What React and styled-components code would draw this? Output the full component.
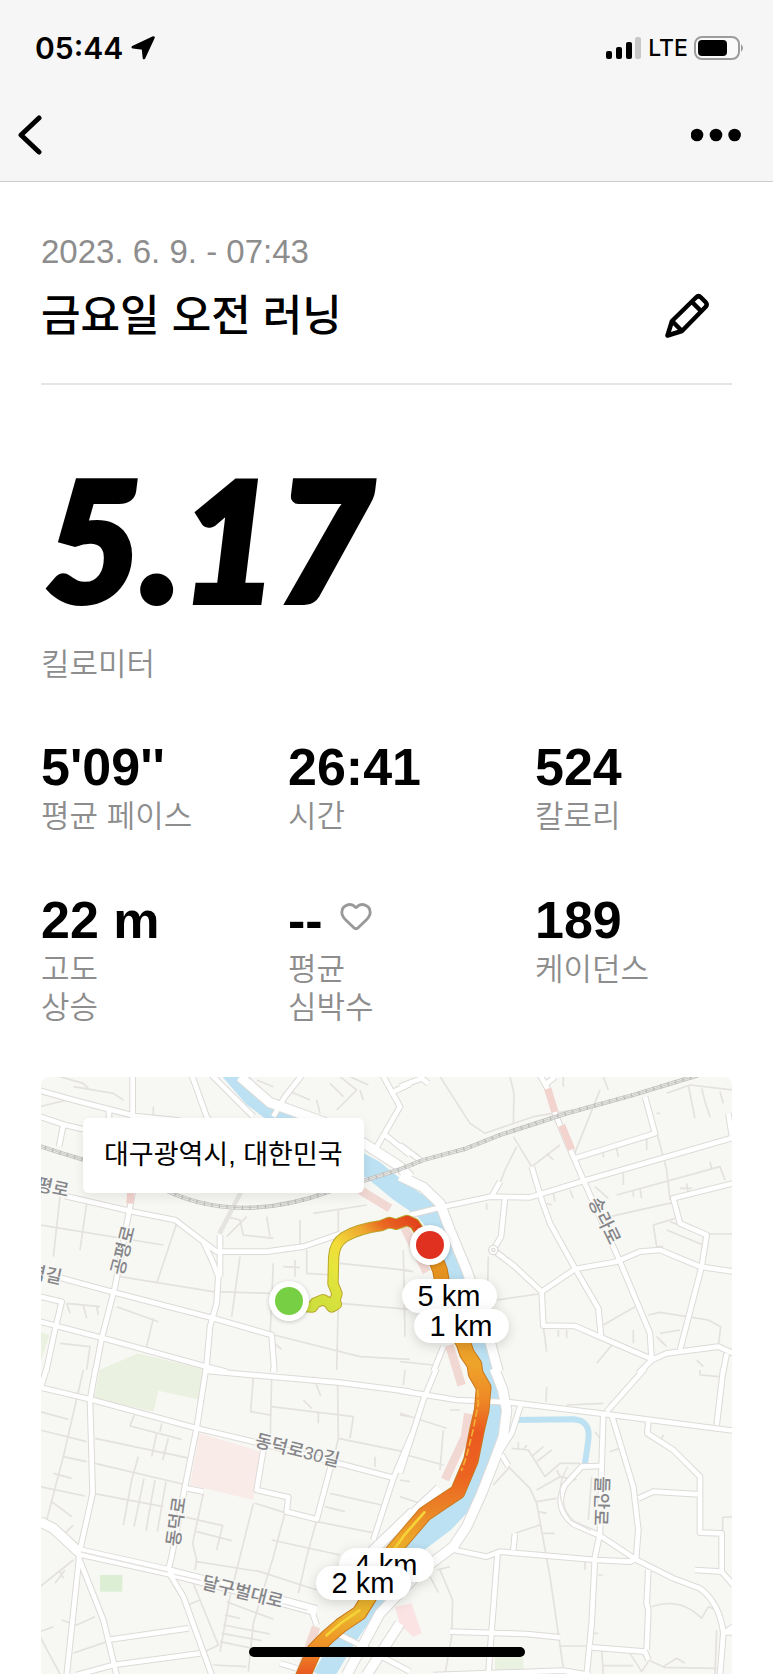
import React from 'react';
import styled, { createGlobalStyle } from 'styled-components';
import { Heart } from 'lucide-react';

const latin = `'Liberation Sans', 'Noto Sans CJK KR', sans-serif`;

const GlobalStyle = createGlobalStyle`
    * {
        box-sizing: border-box;
    }

    body {
        margin: 0;
        background-color: #fff;
        color: #000;
        font-family: ${latin};
    }
`

const stats = [
    { value: "5'09''", label: '평균 페이스' },
    { value: '26:41', label: '시간' },
    { value: '524', label: '칼로리' },
    { value: '22 m', label: '고도\n상승' },
    { value: '--', label: '평균\n심박수', heart: true },
    { value: '189', label: '케이던스' },
];

// Every tile has its own origin, in thirds of a map pixel
const tiles = [
    {
        origin: '-3 -21',
        wide: [
            'M600 20 L690 98 L850 156 L975 222 L1080 290 L1110 322',
        ],
        roads: [
            'M0 62 L100 90 L285 138 L420 152',
            'M278 0 L278 368 L272 400 L225 650 L185 805 L166 905',
            'M75 378 L280 425 L405 450 L490 515 L530 545 L680 545 L790 530 L900 492',
            'M490 515 L520 580 L535 620 L530 700 L510 770 L498 905',
            'M540 495 L540 620',
            'M30 615 L215 665 L520 745 L695 795 L703 905',
            'M0 680 L65 695 L45 780 L18 905',
            'M0 755 L190 805 L500 890 L560 905',
            'M450 0 L500 140 L540 200',
            'M500 0 L640 140',
            'M0 140 L75 165 L140 180',
            'M70 165 L57 230',
            'M207 120 V150',
            'M790 10 L735 80 L700 140',
            'M1025 10 L1080 110 L1005 240',
            'M1050 70 L1110 42',
            'M1030 190 L1110 255',
        ],
        lanes: [
            'M0 110 L80 90 L160 98 M60 20 L130 40 L150 60 M100 50 L220 70 L250 90',
            'M0 465 L370 525 M60 380 L40 560 M140 400 L120 540 M410 460 L350 640',
            'M240 620 L520 665 L690 670 M80 700 L180 710 M80 700 L90 730 M130 705 L140 745 M170 710 L175 735',
            'M230 710 L355 755 M340 745 L315 850 M60 820 L150 830 L140 900',
            'M600 370 L560 440 L600 450 L610 495 L700 505 M680 440 L690 500 M780 450 L780 540 M895 420 L895 500',
            'M600 560 L575 740 M700 580 L690 800 M765 570 V620 M730 590 L780 592 M800 540 L800 610 L880 615',
            'M895 690 L890 900 M900 580 L1110 602 M900 700 L1110 718 M703 795 L960 860 L1110 868 M703 820 L725 838',
            'M890 120 L950 60 L900 20 M870 40 L910 80 M960 60 L970 90 M740 60 L810 90 M650 30 L700 50',
            'M985 45 L930 20 M830 90 L840 130 M340 110 V140 M820 430 L980 405 M620 440 L560 500',
        ],
    },
    {
        origin: '1077 -21',
        wide: [
            'M0 318 L70 352 L120 400 L150 480 L200 600 L255 760 L295 905',
        ],
        roads: [
            'M412 0 L445 60 L465 130 L520 260 L550 330 L660 575 L750 790 L755 870 L715 910',
            'M30 435 L130 410 L270 380 L390 382 L560 330 L1000 203',
            'M525 265 L765 190 L735 80',
            'M985 130 L997 205',
            'M435 45 L465 20',
            'M395 290 L425 390 L450 460 L525 595 L595 715 L603 800',
            'M300 335 L275 380',
            'M315 385 L303 500 L280 540 L345 590 L425 665 L430 767 L525 768 L610 805 L750 865',
            'M425 665 L525 597 L650 575 L720 545 L780 540 L900 590 L1000 605',
            'M1000 340 L820 385 L840 460 L920 495 L905 590 L840 840',
            'M755 870 L800 850 L955 830 L1000 850',
            'M980 850 L970 905',
            'M0 225 L60 270',
            'M0 50 L65 25 L85 40',
            'M130 830 L100 905',
        ],
        lanes: [
            'M120 20 L210 160 L255 190 M330 20 L342 70 L340 160 M255 190 L400 140 L520 120',
            'M340 200 L395 290 M350 230 L315 300 L300 340 M395 290 L480 225 M440 250 L460 270',
            'M520 260 L600 60 M610 20 L625 60 M865 45 L885 145 M905 55 L915 95 L930 140 M800 70 L870 45 L1000 60',
            'M960 65 L970 100 M770 185 L800 300 L810 390 M740 205 V240 M650 235 L655 260 M610 245 V262',
            'M650 375 L960 290 L975 330 M630 440 L830 395 M670 310 V345 M700 360 V380 M720 355 L725 385 M930 275 L935 295',
            'M840 355 L875 355 M860 340 L865 370 M825 445 L760 465 L770 530 L790 530 M800 480 L910 525 M810 455 L920 495',
            'M920 492 L1000 492 M265 560 L262 690 M290 690 L415 672 M430 770 L440 845 M475 780 V800 M500 780 V805',
            'M610 765 L705 710 M745 735 L780 727 L925 750 L962 770 L955 830 M780 790 L840 780 M770 800 L800 830',
            'M590 880 L640 820 M700 780 V820 M0 875 L100 885 M0 600 L40 605 M10 540 L15 800 M260 400 V420',
            'M440 400 L455 405 M510 360 L520 385 M460 370 L465 395 M585 350 L625 385 M890 870 L910 890 M770 130 L780 130 M490 20 V50',
        ],
    },
    {
        origin: '-3 879',
        wide: [
            'M0 455 L40 475 L115 545 L250 575 L385 605 L600 660 L830 722',
            'M990 550 L1120 425',
        ],
        roads: [
            'M167 -5 L150 90 L158 370 L120 540 L80 915',
            'M20 -5 L0 60',
            'M0 52 L150 88 L470 175 L660 220 L915 285 L1065 325',
            'M498 -5 L470 175 L435 350 L395 560 L385 600',
            'M500 3 L900 38 L1110 65',
            'M440 355 L490 365',
            'M670 240 L650 360 L745 382 L740 425 L830 448 L872 290',
            'M1115 195 L1060 325 L1000 510',
            'M385 605 L430 680 L515 915',
            'M115 560 L190 750 L230 915',
            'M200 810 L445 775',
            'M110 915 L220 885 L480 850',
            'M815 722 L830 765',
            'M890 790 L960 825 L1110 905',
            'M700 -5 V5',
            'M720 880 L770 895',
        ],
        lanes: [
            'M0 125 L85 148 M0 180 L140 215 M130 0 L70 260 L20 450 M70 260 L140 275 M40 310 L95 325 M0 350 L135 378',
            'M35 395 L95 440 M75 490 L100 465 M165 205 L450 265 M165 280 L440 345 M160 370 L370 410',
            'M285 130 L270 168 L425 208 M350 190 L335 260 M365 160 L360 185 M385 205 L368 270 M295 260 L275 330 L250 465',
            'M312 325 L282 470 M345 330 L318 482 M378 335 L352 485 M430 440 L548 467 L530 540 M470 485 L575 512 M490 370 L458 520 L470 570 L465 600',
            'M640 20 L632 125 L690 135 M695 20 L690 230 M695 110 L940 140 L930 205 M893 45 L895 205 L850 400 M835 130 V160',
            'M790 90 L815 115 M820 20 L842 78 M895 205 L1090 245 M1005 260 V290 M870 370 L1025 405 M855 410 L915 425',
            'M640 400 L570 680 L540 845 M645 400 L735 428 L700 560 L640 760 L625 905 M830 450 L800 560 L775 670',
            'M695 510 L900 555 M830 455 L1010 490 M470 575 L660 605 L830 660 M560 695 L700 748 M555 735 L600 745 M550 765 L690 792',
            'M545 790 L665 812 M540 815 L660 840 M430 710 L480 690 L535 825 L485 850 M520 885 L620 890',
            'M0 650 L100 570 M75 600 L45 640 M60 605 L70 625 M65 750 L110 765 L165 740 M0 785 L40 770 M0 800 L60 912 M100 850 L200 815',
            'M460 640 L480 690 M1095 0 L1090 45 M1110 140 L1080 135',
        ],
    },
    {
        origin: '1077 879',
        wide: [
            'M283 -5 L308 60 L320 120 L310 200 L280 280 L245 370 L200 470 L160 530 L60 605 L-60 730 L-160 915',
            'M0 470 L120 355',
            'M0 760 L-100 915',
        ],
        roads: [
            'M0 62 L170 90 L330 97 L600 130 L1000 182',
            'M110 -5 L70 90 L0 310',
            'M362 105 L335 190 L290 260',
            'M305 255 L325 288',
            'M735 -5 L620 125',
            'M610 130 L605 290 L600 490 L585 560 L575 760 L560 915',
            'M635 135 L700 350 L715 480 L708 570',
            'M970 -5 L950 165',
            'M745 155 L742 190 L820 240 L900 320 L900 488 L965 490 L965 605 L1000 645',
            'M885 600 L965 605',
            'M900 373 L760 365 L715 385',
            'M600 288 L545 290 L495 345 Q460 415 520 462 L600 497 L710 570 L820 625 L900 655 Q960 700 970 790 L960 915',
            'M165 540 L260 560 L300 545 L590 570 L690 575 L710 565',
            'M293 545 L275 780 L265 915',
            'M150 785 L380 792 L480 802',
            'M340 540 L345 490',
            'M745 600 L740 700 L745 720 L740 840',
            'M575 832 L735 845 L745 870',
            'M100 915 L490 902 L570 915',
            'M970 790 L1000 770 M970 787 H1000',
        ],
        lanes: [
            'M440 50 L438 95 M335 235 L385 240 L435 320 L480 280 L540 280 M355 215 V235 M380 225 L370 240 M395 260 L430 230',
            'M410 275 L455 240 M325 290 L390 355 L410 400 L450 620 L490 895 M410 395 L470 385 M410 360 L480 320 L470 300',
            'M480 320 L530 330 M415 425 L440 430 M345 490 L420 465 M430 490 L465 490 M280 345 L330 290 M575 320 L565 450',
            'M630 245 L660 235 M790 195 L780 215 M585 185 L600 205 M500 105 L610 100 M1000 440 L968 442 V490',
            'M755 710 Q840 680 905 745 L925 710 L950 720 M480 828 L560 828 M595 790 H580 M120 600 L158 690 L155 800 L135 912',
            'M90 620 L115 668 M110 600 L150 590 M605 840 L610 912 M610 887 L700 887 M690 850 L725 905 L745 875',
            'M745 870 L790 890 L830 865 L855 880 M790 892 L950 895 M950 780 L945 912 M555 575 V600 M595 615 H608 M900 0 V15 L960 20',
            'M0 330 L30 335 M0 130 L140 175 M130 180 L120 300 M20 255 L130 285 M0 380 L60 400 M150 120 H180',
        ],
    },
];

const streetNames = [
    { text: '평로', x: -6, y: 113, angle: 12 },
    { text: '역길', x: -13, y: 200, angle: 12 },
    { text: '공평로', x: 82, y: 199, angle: -76 },
    { text: '송라로', x: 547, y: 124, angle: 64 },
    { text: '동덕로30길', x: 213, y: 369, angle: 14 },
    { text: '동덕로', x: 138, y: 470, angle: -82 },
    { text: '달구벌대로', x: 160, y: 511, angle: 14 },
    { text: '들안로', x: 555, y: 399, angle: 92 },
];

const kilometers = [
    { text: '5 km', x: 361, y: 202 },
    { text: '1 km', x: 373, y: 232 },
    { text: '4 km', x: 298, y: 471 },
    { text: '2 km', x: 275, y: 489 },
];

const river = 'M560 -30 L637 59 L717 119 L847 199 L997 279 L1077 344 L1147 392 L1187 440 L1220 510 L1250 600 L1295 710 L1330 830 L1350 940 L1365 1020 L1350 1090 L1325 1170 L1280 1260 L1210 1335 L1130 1395 L1070 1450 L1000 1560 L930 1660 L880 1740 L845 1800';
const railway = 'M-10 205 L60 228 L200 270 L370 338 Q590 445 870 342 L1077 277 L1147 249 L1277 214 L1377 174 L1577 109 L1777 54 L1970 -5';
const outbound = 'M790 689 L815 690 L822 678 L846 668 L862 676 L872 690 L886 682 L882 670 L888 650 L876 620 L878 540 Q880 500 910 480 Q950 456 1020 446 L1045 436 L1065 442 L1098 430 L1120 440 L1140 470 L1167 504';
const homeward = 'M1167 504 L1197 580 L1210 650 L1245 760 L1268 800 L1278 830 L1300 862 L1304 890 L1328 932 L1322 1000 L1308 1060 L1290 1150 L1250 1245 L1200 1278 L1150 1312 L1092 1380 L1050 1430 L985 1560 L955 1608 L900 1645 L857 1682 L820 1720 L785 1800';

const Street = ({ list, pass }) => (
    tiles.map(tile => (
        <g key={tile.origin} transform={`translate(${tile.origin})`}>
            {tile[list].map(d => <path key={d} d={d} {...pass} />)}
        </g>
    ))
);

const RunMap = () => (
    <MapDrawing viewBox='0 0 691 597' role='img' aria-label='러닝 경로'>
        <defs>
            <linearGradient id='out' gradientUnits='userSpaceOnUse' x1='850' y1='700' x2='1110' y2='420'>
                <stop offset='0' stopColor='#cfdf3d' />
                <stop offset='.3' stopColor='#e6e53c' />
                <stop offset='.45' stopColor='#f2dc38' />
                <stop offset='.68' stopColor='#eda42e' />
                <stop offset='.8' stopColor='#ea6a22' />
                <stop offset='1' stopColor='#e2421c' />
            </linearGradient>
            <linearGradient id='home' gradientUnits='userSpaceOnUse' x1='0' y1='500' x2='0' y2='1791'>
                <stop offset='0' stopColor='#e48f1c' />
                <stop offset='.28' stopColor='#eea32b' />
                <stop offset='.36' stopColor='#ee8a26' />
                <stop offset='.44' stopColor='#ea5a1f' />
                <stop offset='.54' stopColor='#ec6421' />
                <stop offset='.62' stopColor='#ea8427' />
                <stop offset='.7' stopColor='#eeae2b' />
                <stop offset='.86' stopColor='#ebb52e' />
                <stop offset='.93' stopColor='#ee9228' />
                <stop offset='1' stopColor='#ea5a20' />
            </linearGradient>
        </defs>
        <g transform='scale(.33333)' fill='none' strokeLinejoin='round'>
            <path d='M290 829 L500 879 L480 969 L352 941 L337 1004 L160 964 L175 879 Z' fill='#ebf1e1' />
            <path d='M0 765 L25 775 L0 850 Z' fill='#ebf1e1' />
            <path d='M177 1494 H244 V1544 H177 Z' fill='#dcefd5' />
            <path d='M1362 1740 H1447 V1780 H1362 Z' fill='#e9f1e0' />
            <path d='M475 1069 L662 1124 L637 1269 L447 1224 Z' fill='#f9ebe8' />
            <path d='M1062 1590 L1112 1579 L1142 1669 L1117 1679 L1077 1645 Z' fill='#fbe3e3' />
            <Street list='lanes' pass={{ stroke: '#e4e1de', strokeWidth: 5 }} />
            <path d={river} stroke='#bce1f2' strokeWidth='62' />
            <path d='M1417 1029 L1597 1027 Q1650 1030 1642 1089 L1632 1160' stroke='#bce1f2' strokeWidth='18' />
            <Street list='wide' pass={{ stroke: '#dddad8', strokeWidth: 34 }} />
            <Street list='roads' pass={{ stroke: '#dddad8', strokeWidth: 20 }} />
            <Street list='wide' pass={{ stroke: '#fff', strokeWidth: 28 }} />
            <Street list='roads' pass={{ stroke: '#fff', strokeWidth: 14 }} />
            <path d='M120 1425 L380 1485 M400 1492 L480 1510 M725 1580 L800 1600 M1580 1170 Q1530 1250 1590 1330 L1650 1360' stroke='#e4e1df' strokeWidth='4' />
            <path d='M269 345 L267 380 M1520 35 L1542 105 M1562 145 L1592 218' stroke='#f3d3ce' strokeWidth='22' />
            <path d='M957 339 L1047 394 M1090 450 L1157 585 M1225 805 L1262 925 M1282 1010 L1272 1080 L1212 1208 M825 1650 L777 1791' stroke='#f0d0cb' strokeWidth='26' opacity='.8' />
            <path d='M535 470 L600 345' stroke='#e6e4e0' strokeWidth='14' />
            <path d={railway} stroke='#c6c6c5' strokeWidth='13' />
            <path d={railway} stroke='#eeeeea' strokeWidth='7' />
            <path d={railway} stroke='#b5b5b4' strokeWidth='12' strokeDasharray='3 20' />
            <path d={railway} stroke='#b5b5b4' strokeWidth='2' />
            <circle cx='1357' cy='519' r='14' fill='#fff' stroke='#dddad8' strokeWidth='4' />
            <circle cx='1357' cy='519' r='5' stroke='#dddad8' strokeWidth='4' />
            <g strokeLinecap='round'>
                <path d={outbound} stroke='#b9a62c' strokeWidth='34' />
                <path d={outbound} stroke='url(#out)' strokeWidth='28' />
                <path d={homeward} stroke='#c9781c' strokeWidth='47' />
                <path d={homeward} stroke='url(#home)' strokeWidth='41' />
                <path d='M1310 940 L1312 980 L1296 1060 L1276 1140 L1262 1180' stroke='#f2b035' strokeWidth='5' strokeDasharray='18 12' />
                <path d='M1150 1306 L1092 1372 L1050 1430 M955 1600 L900 1638 L857 1675' stroke='#f6d437' strokeWidth='8' />
            </g>
        </g>
        {streetNames.map(({ text, x, y, angle }) => (
            <StreetName key={text} transform={`translate(${x} ${y}) rotate(${angle})`}>{text}</StreetName>
        ))}
        <circle cx='248' cy='224' r='20' fill='#fff' filter='drop-shadow(0 1px 2px #0003)' />
        <circle cx='248' cy='224' r='14' fill='#77d043' />
        <circle cx='389' cy='168' r='20' fill='#fff' filter='drop-shadow(0 1px 2px #0003)' />
        <circle cx='389' cy='168' r='14' fill='#e03020' />
        {kilometers.map(({ text, x, y }) => (
            <g key={text} transform={`translate(${x} ${y})`}>
                <Pill width='95' height='34' rx='17' />
                <PillText x='47' y='27'>{text}</PillText>
            </g>
        ))}
    </MapDrawing>
);

const App = () => {
    return (
        <>
            <GlobalStyle />
            <Header>
                <StatusBar>
                    <Clock>
                        05:44
                        <svg width='24' height='24' viewBox='0 0 24 24'>
                            <path d='M22.5 1.5 L13 22 L12 12.5 L1.8 11.2 Z' stroke='#000' strokeWidth='2.6' strokeLinejoin='round' />
                        </svg>
                    </Clock>
                    <Signals>
                        <svg width='36' height='22' viewBox='0 0 36 22'>
                            <rect x='0' y='14' width='6' height='8' rx='2' />
                            <rect x='10' y='10' width='6' height='12' rx='2' />
                            <rect x='20' y='5' width='6' height='17' rx='2' />
                            <rect x='29' y='0' width='6' height='22' rx='2' fill='#c8c8c8' />
                        </svg>
                        LTE
                        <svg width='51' height='24' viewBox='0 0 51 24'>
                            <rect x='1' y='1' width='44' height='22' rx='7' fill='#fafafa' stroke='#9c9c9c' strokeWidth='2' />
                            <rect x='4' y='4' width='29' height='16' rx='4' />
                            <path d='M47 8 Q51 12 47 16 Z' fill='#9c9c9c' />
                        </svg>
                    </Signals>
                </StatusBar>
                <NavBar>
                    <IconButton aria-label='뒤로'>
                        <svg width='24' height='40' viewBox='0 0 24 40'>
                            <path d='M21 3 L3 20 L21 37' fill='none' stroke='#000' strokeWidth='5' strokeLinecap='round' strokeLinejoin='round' />
                        </svg>
                    </IconButton>
                    <IconButton aria-label='더 보기'>
                        <svg width='50' height='14' viewBox='0 0 50 14'>
                            <circle cx='6' cy='7' r='6.3' />
                            <circle cx='25' cy='7' r='6.3' />
                            <circle cx='43.6' cy='7' r='6.3' />
                        </svg>
                    </IconButton>
                </NavBar>
            </Header>

            <Content>
                <Date>2023. 6. 9. - 07:43</Date>
                <TitleRow>
                    <Title>금요일 오전 러닝</Title>
                    <IconButton aria-label='제목 편집'>
                        <svg width='46' height='46' viewBox='0 0 46 46' fill='none' stroke='#000' strokeWidth='4.5' strokeLinejoin='round'>
                            <path d='M3.5 42.5 L8 28 L32 4.5 Q34.5 2 37 4.5 L41.5 9 Q44 11.5 41.5 14 L18 38 Z' />
                            <path d='M28 9 L37 18 M8 28 L18 38' />
                        </svg>
                    </IconButton>
                </TitleRow>

                <Distance>5.17</Distance>
                <Label>킬로미터</Label>

                <Stats>
                    {stats.map(({ value, label, heart }) => (
                        <div key={label}>
                            <Value>
                                {value}
                                {heart && <HeartIcon size={34} strokeWidth={2} />}
                            </Value>
                            <Label>{label}</Label>
                        </div>
                    ))}
                </Stats>

                <MapBox>
                    <RunMap />
                    <Place>대구광역시, 대한민국</Place>
                </MapBox>
            </Content>
            <HomeIndicator />
        </>
    );
}

const Header = styled.header`
    background-color: #f6f6f6;
    border-bottom: 1px solid #ccc;
    padding-top: 30px;
`

const StatusBar = styled.div`
    display: flex;
    justify-content: space-between;
    align-items: center;
    height: 36px;
    padding: 0 28px 0 35px;
    font-family: Inter, sans-serif;
`

const Clock = styled.div`
    display: flex;
    align-items: center;
    gap: 8px;
    font-size: 30px;
    font-weight: 600;
`

const Signals = styled.div`
    display: flex;
    align-items: center;
    gap: 6px;
    font-size: 23px;
    font-weight: 500;
`

const NavBar = styled.nav`
    display: flex;
    justify-content: space-between;
    align-items: center;
    height: 115px;
    padding: 22px 32px 0 18px;
`

const IconButton = styled.button`
    display: flex;
    padding: 0;
    border: none;
    background: none;
    cursor: pointer;
`

const Content = styled.main`
    padding: 50px 41px 0;
`

const Date = styled.div`
    font-size: 33px;
    line-height: 40px;
    color: #8d8d8d;
`

const TitleRow = styled.div`
    display: flex;
    justify-content: space-between;
    align-items: center;
    padding: 12px 22px 35px 0;
    border-bottom: 2px solid #e5e5e5;
`

const Title = styled.h1`
    margin: 0;
    font-size: 43px;
    font-weight: 500;
    line-height: 64px;
`

const Distance = styled.div`
    margin: 64px 0 20px;
    padding-left: 4px;
    font-family: Lato, sans-serif;
    font-size: 166px;
    font-style: italic;
    font-weight: 900;
    line-height: 177px;
    -webkit-text-stroke: 6px #000;
`

const Label = styled.div`
    font-size: 31px;
    font-weight: 350;
    line-height: 38px;
    color: #8d8d8d;
    white-space: pre-line;
`

const Stats = styled.div`
    display: grid;
    grid-template-columns: repeat(3, 1fr);
    gap: 53px 50px;
    margin: 52px 0 50px;
`

const Value = styled.div`
    display: flex;
    align-items: center;
    gap: 16px;
    font-size: 52px;
    font-weight: bold;
    line-height: 62px;
`

const HeartIcon = styled(Heart)`
    margin-bottom: 8px;
    color: #999;
`

const MapBox = styled.section`
    position: relative;
    overflow: hidden;
    border-radius: 8px 8px 0 0;
    background-color: #f7f8f3;
`

const MapDrawing = styled.svg`
    display: block;
    width: 100%;
`

const StreetName = styled.text`
    font-size: 18px;
    font-weight: 500;
    fill: #85858a;
    stroke: #f7f8f3;
    stroke-width: 3px;
    paint-order: stroke;
`

const Pill = styled.rect`
    fill: #fff;
    filter: drop-shadow(0 3px 6px rgba(0, 0, 0, .15));
`

const PillText = styled.text`
    font-size: 29px;
    text-anchor: middle;
`

const Place = styled.div`
    position: absolute;
    top: 41px;
    left: 42px;
    padding: 17px 21px 18px;
    border-radius: 6px;
    background-color: #fff;
    box-shadow: 0 4px 12px rgba(0, 0, 0, .08);
    font-size: 27px;
    line-height: 40px;
`

const HomeIndicator = styled.div`
    position: fixed;
    bottom: 17px;
    left: 50%;
    width: 276px;
    height: 10px;
    margin-left: -138px;
    border-radius: 5px;
    background-color: #000;
`

export default App;
